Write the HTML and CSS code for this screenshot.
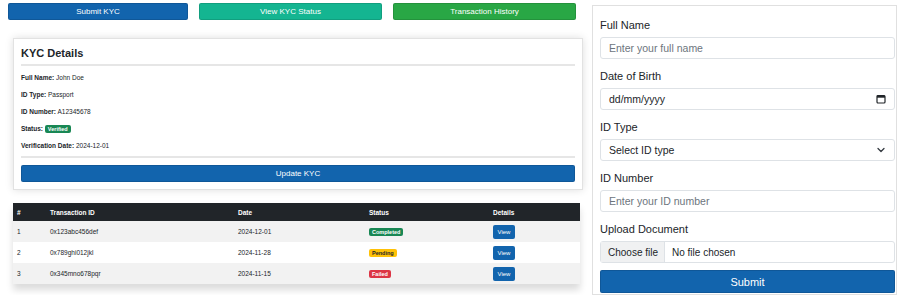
FILE: index.html
```html
<!DOCTYPE html>
<html lang="en">
<head>
<meta charset="UTF-8">
<meta name="viewport" content="width=device-width, initial-scale=1.0">
<title>KYC Dashboard</title>
<link rel="stylesheet" href="styles.css">
</head>
<body>

<div class="page">
    <div class="main">
        <div class="nav-buttons">
            <button class="btn btn-blue">Submit KYC</button>
            <button class="btn btn-teal">View KYC Status</button>
            <button class="btn btn-green">Transaction History</button>
        </div>

        <div class="kyc-card">
            <h3>KYC Details</h3>
            <div class="divider"></div>
            <p><b>Full Name:</b> John Doe</p>
            <p><b>ID Type:</b> Passport</p>
            <p><b>ID Number:</b> A12345678</p>
            <p><b>Status:</b> <span class="badge badge-green">Verified</span></p>
            <p><b>Verification Date:</b> 2024-12-01</p>
            <div class="divider"></div>
            <button class="btn btn-blue btn-wide">Update KYC</button>
        </div>

        <div class="table-container">
            <table>
                <thead>
                    <tr>
                        <th class="col-num">#</th>
                        <th class="col-id">Transaction ID</th>
                        <th class="col-date">Date</th>
                        <th class="col-status">Status</th>
                        <th>Details</th>
                    </tr>
                </thead>
                <tbody>
                    <tr>
                        <td>1</td>
                        <td>0x123abc456def</td>
                        <td>2024-12-01</td>
                        <td><span class="badge badge-green">Completed</span></td>
                        <td><button class="btn-view">View</button></td>
                    </tr>
                    <tr>
                        <td>2</td>
                        <td>0x789ghi012jkl</td>
                        <td>2024-11-28</td>
                        <td><span class="badge badge-yellow">Pending</span></td>
                        <td><button class="btn-view">View</button></td>
                    </tr>
                    <tr>
                        <td>3</td>
                        <td>0x345mno678pqr</td>
                        <td>2024-11-15</td>
                        <td><span class="badge badge-red">Failed</span></td>
                        <td><button class="btn-view">View</button></td>
                    </tr>
                </tbody>
            </table>
        </div>
    </div>

    <form class="kyc-form">
        <div class="field">
            <label>Full Name</label>
            <div class="input placeholder">Enter your full name</div>
        </div>
        <div class="field">
            <label>Date of Birth</label>
            <div class="input">
                <span>dd/mm/yyyy</span>
                <svg class="icon" width="10" height="10" viewBox="0 0 10 10">
                    <rect x="1" y="1.5" width="8" height="7.5" rx="1" fill="none" stroke="#212529" stroke-width="1.2"/>
                    <rect x="1" y="1.5" width="8" height="2.2" fill="#212529"/>
                </svg>
            </div>
        </div>
        <div class="field">
            <label>ID Type</label>
            <div class="input">
                <span>Select ID type</span>
                <svg class="icon" width="10" height="10" viewBox="0 0 10 10">
                    <path d="M2 3.5 L5 6.5 L8 3.5" fill="none" stroke="#343a40" stroke-width="1.3" stroke-linecap="round" stroke-linejoin="round"/>
                </svg>
            </div>
        </div>
        <div class="field">
            <label>ID Number</label>
            <div class="input placeholder">Enter your ID number</div>
        </div>
        <div class="field">
            <label>Upload Document</label>
            <div class="input file-input">
                <span class="file-btn">Choose file</span>
                <span class="file-name">No file chosen</span>
            </div>
        </div>
        <button type="button" class="btn btn-blue btn-submit">Submit</button>
    </form>
</div>

</body>
</html>
```

FILE: styles.css
```css
body {
    font-family: "Liberation Sans", Arial, sans-serif;
    margin: 0;
    padding: 0;
    color: #212529;
    background-color: #fff;
}

.page {
    display: flex;
    align-items: flex-start;
}

.main {
    width: 585px;
    margin-right: 7px;
}

/* Botoes do topo */
.nav-buttons {
    display: grid;
    grid-template-columns: 180px 183px 183px;
    gap: 11px;
    margin: 3px 0 0 8px;
}

.btn {
    height: 17px;
    border: 1px solid rgba(0, 0, 0, 0.12);
    border-radius: 2px;
    color: #fff;
    font-family: inherit;
    font-size: 8px;
    padding: 0;
    cursor: pointer;
}

.btn-blue {
    background-color: #1264ad;
}

.btn-teal {
    background-color: #14b591;
}

.btn-green {
    background-color: #29a745;
}

/* Card de detalhes */
.kyc-card {
    width: 570px;
    margin: 18px 0 0 13px;
    padding: 7px;
    border: 1px solid #e2e2e2;
    box-sizing: border-box;
    box-shadow: 0 0 8px rgba(0, 0, 0, 0.13);
    background-color: #fff;
}

.kyc-card h3 {
    font-size: 11px;
    line-height: 14px;
    font-weight: bold;
    margin: 0 0 4px 0;
}

.divider {
    height: 2px;
    background-color: #e6e6e6;
}

.kyc-card p {
    font-size: 6.5px;
    line-height: 10px;
    margin: 7px 0 0 0;
}

.kyc-card p:last-of-type {
    margin-bottom: 5px;
}

.btn-wide {
    display: block;
    width: 100%;
    margin-top: 7px;
    font-size: 8px;
}

.badge {
    display: inline-block;
    font-size: 5.5px;
    font-weight: bold;
    line-height: 8px;
    padding: 0 3px;
    border-radius: 2px;
    color: #fff;
    vertical-align: middle;
}

.badge-green {
    background-color: #198754;
}

.badge-yellow {
    background-color: #ffc107;
    color: #212529;
}

.badge-red {
    background-color: #dc3545;
}

/* Tabela */
.table-container {
    width: 567px;
    margin: 13px 0 0 13px;
    box-shadow: 0 6px 7px rgba(0, 0, 0, 0.14);
}

table {
    width: 100%;
    border-collapse: collapse;
    font-size: 6.5px;
}

th {
    background-color: #212529;
    color: #fff;
    text-align: left;
    height: 18px;
    padding: 0 4px;
    font-weight: bold;
}

td {
    height: 21px;
    padding: 0 4px;
}

.col-num {
    width: 25px;
}

.col-id {
    width: 180px;
}

.col-date {
    width: 123px;
}

.col-status {
    width: 116px;
}

tbody tr:nth-child(odd) {
    background-color: #f2f2f2;
}

.btn-view {
    width: 22px;
    height: 14px;
    border: none;
    border-radius: 2px;
    background-color: #1264ad;
    color: #fff;
    font-family: inherit;
    font-size: 6px;
    padding: 0;
}

/* Formulario lateral */
.kyc-form {
    width: 305px;
    margin-top: 5px;
    padding: 12px 1px 1px 7px;
    border: 1px solid #e0e0e0;
    box-sizing: border-box;
    background-color: #fff;
}

.field {
    margin-bottom: 10px;
}

.field label {
    display: block;
    font-size: 11px;
    line-height: 14px;
    margin-bottom: 5px;
}

.input {
    height: 22px;
    border: 1px solid #dee2e6;
    border-radius: 3px;
    box-sizing: border-box;
    padding: 0 8px;
    font-size: 10.5px;
    display: flex;
    align-items: center;
    justify-content: space-between;
}

.placeholder {
    color: #6c757d;
}

.file-input {
    padding: 0;
    justify-content: flex-start;
}

.file-btn {
    height: 100%;
    display: flex;
    align-items: center;
    padding: 0 6px 0 7px;
    font-size: 10px;
    background-color: #f0f1f2;
    border-right: 1px solid #dee2e6;
}

.file-name {
    padding-left: 7px;
    font-size: 10px;
}

.btn-submit {
    display: block;
    width: 100%;
    height: 23px;
    margin-top: -3px;
    font-size: 11px;
}
```
